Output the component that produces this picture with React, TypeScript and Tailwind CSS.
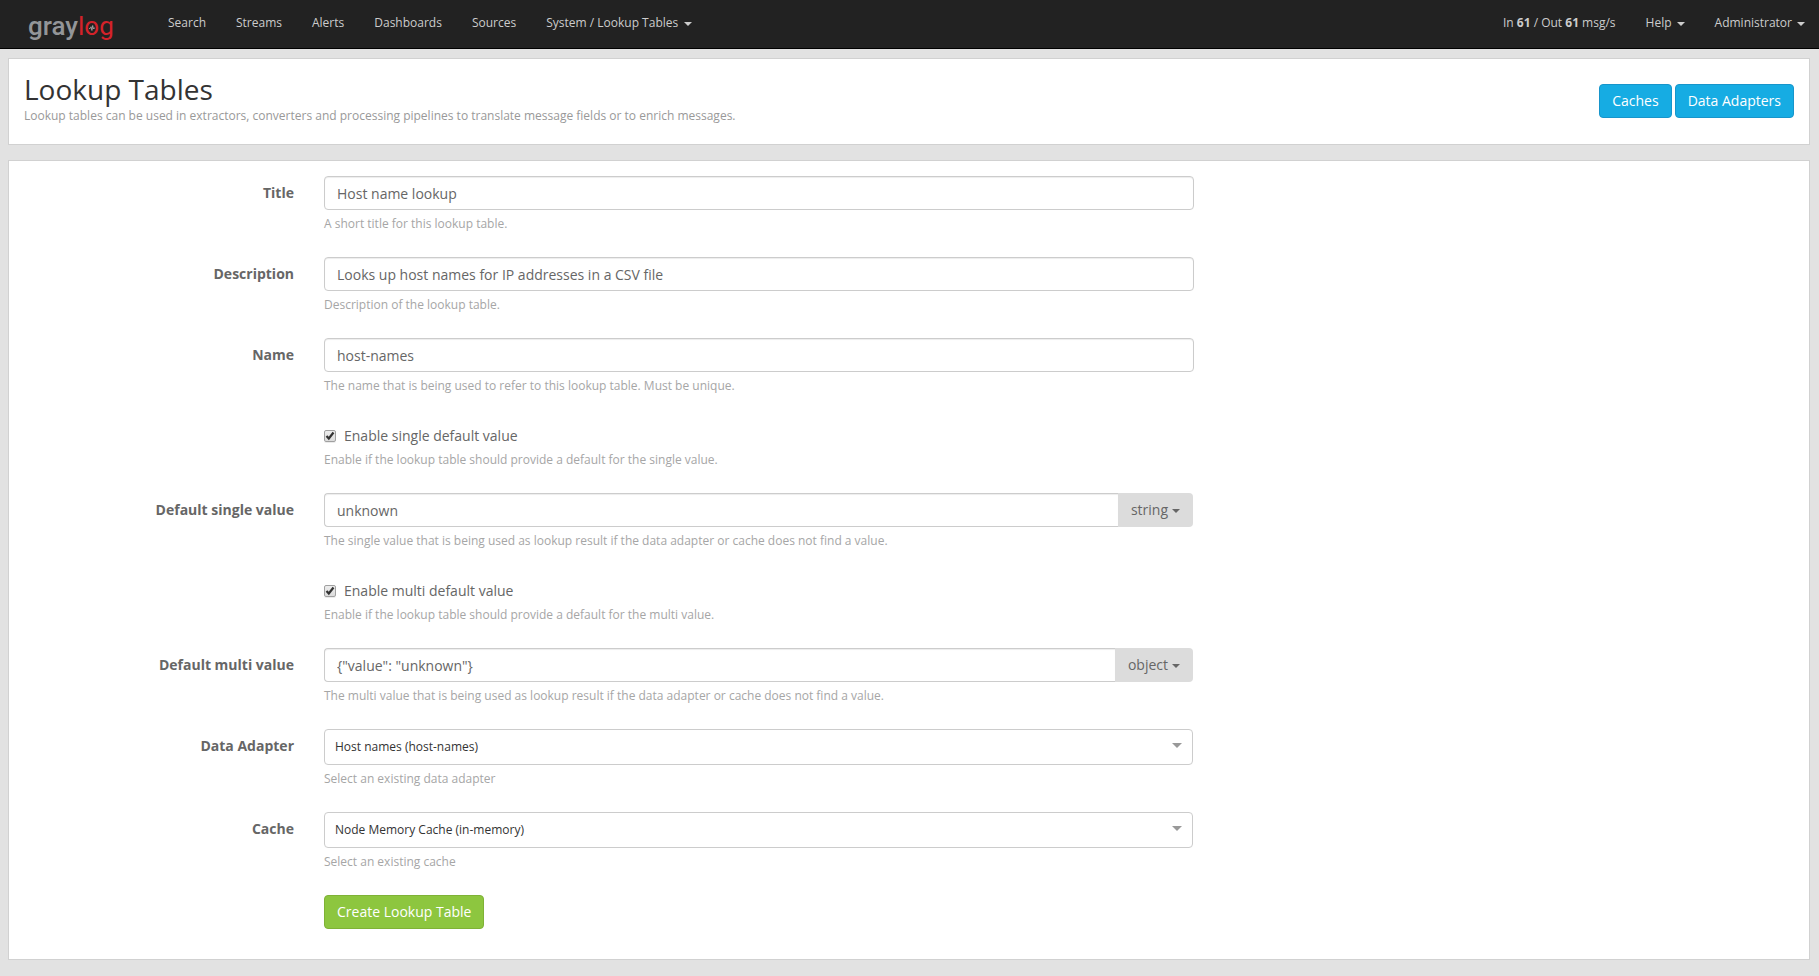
import type { ReactNode } from "react";

function Caret({ className = "" }: { className?: string }) {
  return (
    <svg className={`h-1 w-2 shrink-0 ${className}`} viewBox="0 0 8 4" aria-hidden="true">
      <path d="M0 0h8L4 4z" fill="currentColor" />
    </svg>
  );
}

function Logo() {
  return (
    <a
      href="#"
      aria-label="Graylog"
      className="flex items-baseline pt-1.5 font-[Roboto,sans-serif] text-[26px] leading-8 font-medium text-[#939598]"
    >
      <span>gray</span>
      <span className="font-normal text-[#d4222a]">l</span>
      <span className="relative flex justify-center font-normal text-[#d4222a]">
        o
        <svg
          className="absolute top-[15px] h-1.5 w-1.5"
          viewBox="0 0 7 7"
          fill="none"
          stroke="#b5b5b5"
          strokeWidth="0.9"
          aria-hidden="true"
        >
          <path d="M0 4h1.4L2.4 2l1 4.400L4.300.6l1 4L5.800 3.600H7" />
        </svg>
      </span>
      <span className="font-normal text-[#d4222a]">g</span>
    </a>
  );
}

const links = ["Search", "Streams", "Alerts", "Dashboards", "Sources"];

function NavBar() {
  return (
    <nav className="flex h-[49px] items-center justify-between border-b border-black bg-[#222] pr-3.5 pb-0.5 pl-7 text-xs text-[#ccc]">
      <div className="flex items-center">
        <div className="w-[140px]">
          <Logo />
        </div>
        <div className="flex gap-[30px]">
          {links.map((l) => (
            <a key={l} href="#">
              {l}
            </a>
          ))}
          <a href="#" className="flex items-center gap-1.5">
            System / Lookup Tables <Caret className="mt-0.5" />
          </a>
        </div>
      </div>
      <div className="flex gap-[30px]">
        <a href="#">
          In <b>61</b> / Out <b>61</b> msg/s
        </a>
        <a href="#" className="flex items-center gap-[5px]">
          Help <Caret className="mt-0.5" />
        </a>
        <a href="#" className="flex items-center gap-[5px]">
          Administrator <Caret className="mt-0.5" />
        </a>
      </div>
    </nav>
  );
}

function Row({
  id,
  label,
  help,
  children,
}: {
  id?: string;
  label?: string;
  help?: string;
  children: ReactNode;
}) {
  return (
    <div className="grid grid-cols-12">
      <div className="col-span-2 px-[15px] pt-[7px] text-right leading-5 font-bold">
        {label && <label htmlFor={id}>{label}</label>}
      </div>
      <div className="col-span-6 px-[15px]">
        {children}
        {help && <p className="mt-[5px] mb-[25px] text-xs leading-[17px] text-[#a6a6a6]">{help}</p>}
      </div>
    </div>
  );
}

const box = "border border-[#ccc] bg-white";
const field = `${box} h-[34px] px-3 text-sm text-[#666] shadow-[inset_0_1px_1px_rgba(0,0,0,0.075)]`;

function TextRow({ id, label, help, value }: { id: string; label: string; help: string; value: string }) {
  return (
    <Row id={id} label={label} help={help}>
      <input id={id} type="text" defaultValue={value} className={`${field} block w-full rounded`} />
    </Row>
  );
}

function TypedRow(p: { id: string; label: string; help: string; value: string; type: string }) {
  return (
    <Row id={p.id} label={p.label} help={p.help}>
      <div className="flex pr-px">
        <input
          id={p.id}
          type="text"
          defaultValue={p.value}
          className={`${field} min-w-0 flex-1 rounded-l border-r-0`}
        />
        <button type="button" className="flex h-[34px] items-center gap-1 rounded-r bg-[#dcdcdc] px-[13px]">
          {p.type} <Caret className="mt-0.5" />
        </button>
      </div>
    </Row>
  );
}

function CheckRow({ id, label, help }: { id: string; label: string; help: string }) {
  return (
    <Row>
      <div className="flex items-center gap-2 pt-[7px] leading-5">
        <span className="grid">
          <input
            id={id}
            type="checkbox"
            defaultChecked
            className="peer h-3 w-3 appearance-none rounded-[2px] border border-[#a0a0a0] bg-linear-to-b from-[#ededed] to-[#dcdcdc] shadow-[0_1px_0_rgba(0,0,0,0.08)] [grid-area:1/1]"
          />
          <svg
            className="pointer-events-none invisible h-3 w-3 [grid-area:1/1] peer-checked:visible"
            viewBox="0 0 12 12"
            fill="none"
            stroke="#333"
            strokeWidth="2.2"
            aria-hidden="true"
          >
            <path d="M2.500 6l2.300 2.500L9.500 2.500" />
          </svg>
        </span>
        <label htmlFor={id}>{label}</label>
      </div>
      <p className="mt-[5px] mb-[25px] text-xs leading-[17px] text-[#a6a6a6]">{help}</p>
    </Row>
  );
}

function SelectRow({ id, label, help, value }: { id: string; label: string; help: string; value: string }) {
  return (
    <Row id={id} label={label} help={help}>
      <div className="grid items-center pr-px">
        <select
          id={id}
          className={`${box} h-9 w-full appearance-none rounded px-2.5 text-xs text-[#333] [grid-area:1/1]`}
        >
          <option>{value}</option>
        </select>
        <svg
          className="pointer-events-none mr-[11px] mb-1 h-[5px] w-2.5 justify-self-end [grid-area:1/1]"
          viewBox="0 0 10 5"
          aria-hidden="true"
        >
          <path d="M0 0h10L5 5z" fill="#999" />
        </svg>
      </div>
    </Row>
  );
}

const blueButton = "flex h-[34px] items-center rounded border border-[#1795cb] bg-[#16ace3] px-3 text-white";

export default function App() {
  return (
    <div className="min-h-screen bg-[#e2e2e2] font-['Open_Sans',sans-serif] text-sm text-[#666]">
      <NavBar />
      <main className="flex flex-col gap-[15px] pt-[9px] pr-[9px] pb-4 pl-2">
        <header className="flex items-start justify-between border border-[#d1d1d1] bg-white px-[15px] pt-[15px] pb-[18px]">
          <div>
            <h1 className="text-[28px] leading-[30px] text-[#333]">Lookup Tables</h1>
            <p className="pt-0.5 text-xs leading-5 text-[#999]">
              Lookup tables can be used in extractors, converters and processing pipelines to translate message
              fields or to enrich messages.
            </p>
          </div>
          <div className="flex gap-[3px] pt-2.5">
            <a href="#" className={blueButton}>
              Caches
            </a>
            <a href="#" className={blueButton}>
              Data Adapters
            </a>
          </div>
        </header>

        <form className="border border-[#d1d1d1] bg-white pt-[15px] pb-[30px]">
          <TextRow id="title" label="Title" value="Host name lookup" help="A short title for this lookup table." />
          <TextRow
            id="description"
            label="Description"
            value="Looks up host names for IP addresses in a CSV file"
            help="Description of the lookup table."
          />
          <TextRow
            id="name"
            label="Name"
            value="host-names"
            help="The name that is being used to refer to this lookup table. Must be unique."
          />
          <CheckRow
            id="enable-single"
            label="Enable single default value"
            help="Enable if the lookup table should provide a default for the single value."
          />
          <TypedRow
            id="single"
            label="Default single value"
            value="unknown"
            type="string"
            help="The single value that is being used as lookup result if the data adapter or cache does not find a value."
          />
          <CheckRow
            id="enable-multi"
            label="Enable multi default value"
            help="Enable if the lookup table should provide a default for the multi value."
          />
          <TypedRow
            id="multi"
            label="Default multi value"
            value={'{"value": "unknown"}'}
            type="object"
            help="The multi value that is being used as lookup result if the data adapter or cache does not find a value."
          />
          <SelectRow
            id="adapter"
            label="Data Adapter"
            value="Host names (host-names)"
            help="Select an existing data adapter"
          />
          <SelectRow
            id="cache"
            label="Cache"
            value="Node Memory Cache (in-memory)"
            help="Select an existing cache"
          />
          <Row>
            <button
              type="submit"
              className="flex h-[34px] items-center rounded border border-[#7fb236] bg-[#8dc63f] px-3 text-white"
            >
              Create Lookup Table
            </button>
          </Row>
        </form>
      </main>
    </div>
  );
}
